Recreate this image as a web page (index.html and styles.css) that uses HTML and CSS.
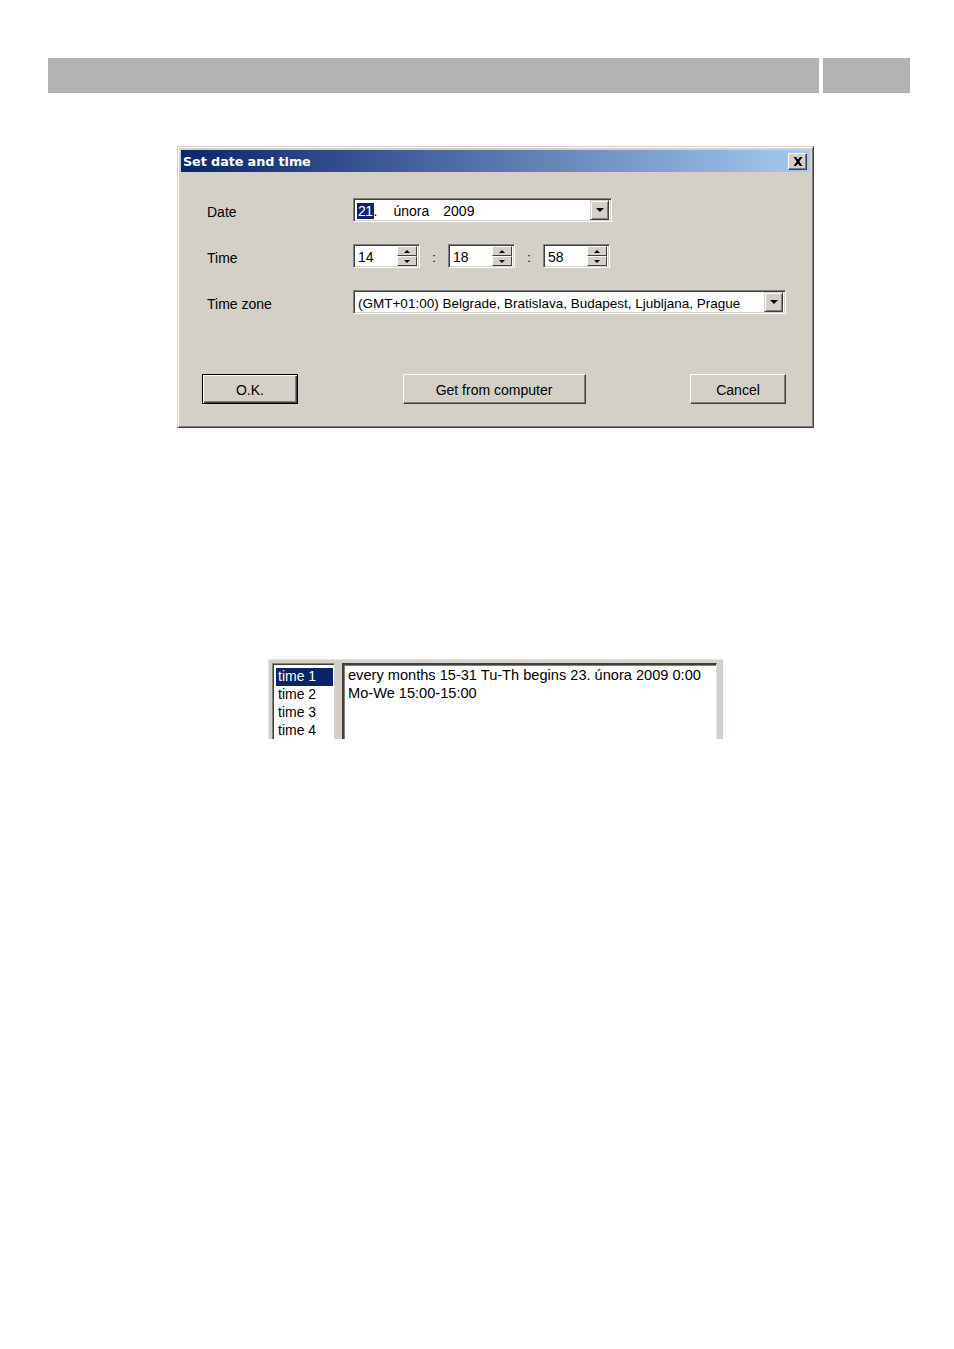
FILE: index.html
```html
<!DOCTYPE HTML>
<html>
<head>
    <meta http-equiv="content-type" content="text/html" />
    <title>Set date and time</title>
    <link rel="stylesheet" href="styles.css">
</head>
<body>

<div class="page-header">
    <div class="header-bar header-main"></div>
    <div class="header-bar header-side"></div>
</div>

<div class="dialog">
    <div class="dialog-title">
        <span class="title-text">Set date and time</span>
        <span class="title-close">
            <svg width="10" height="9" viewBox="0 0 10 9"><path d="M0.5 0h2.5l2 2.6L7 0h2.5L6.3 4.5 9.5 9H7L5 6.4 3 9H0.5l3.2-4.5z" fill="#000"/></svg>
        </span>
    </div>
    <div class="dialog-body">
        <div class="form-row">
            <div class="form-label">Date</div>
            <div class="field field-date">
                <span class="field-text"><span class="sel">21</span>.<span class="gap-a"></span>února<span class="gap-b"></span>2009</span>
                <span class="drop-btn"><span class="tri-down"></span></span>
            </div>
        </div>
        <div class="form-row">
            <div class="form-label">Time</div>
            <div class="time-group">
                <div class="field field-spin">
                    <span class="field-text">14</span>
                    <span class="spin"><span class="spin-btn"><span class="tri-up-s"></span></span><span class="spin-btn"><span class="tri-down-s"></span></span></span>
                </div>
                <span class="colon">:</span>
                <div class="field field-spin">
                    <span class="field-text">18</span>
                    <span class="spin"><span class="spin-btn"><span class="tri-up-s"></span></span><span class="spin-btn"><span class="tri-down-s"></span></span></span>
                </div>
                <span class="colon">:</span>
                <div class="field field-spin">
                    <span class="field-text">58</span>
                    <span class="spin"><span class="spin-btn"><span class="tri-up-s"></span></span><span class="spin-btn"><span class="tri-down-s"></span></span></span>
                </div>
            </div>
        </div>
        <div class="form-row">
            <div class="form-label">Time zone</div>
            <div class="field field-zone">
                <span class="field-text">(GMT+01:00) Belgrade, Bratislava, Budapest, Ljubljana, Prague</span>
                <span class="drop-btn"><span class="tri-down"></span></span>
            </div>
        </div>
        <div class="button-row">
            <div class="btn btn-default"><span>O.K.</span></div>
            <div class="btn btn-wide"><span>Get from computer</span></div>
            <div class="btn"><span>Cancel</span></div>
        </div>
    </div>
</div>

<div class="schedule">
    <div class="schedule-list">
        <div class="list-item active">time 1</div>
        <div class="list-item">time 2</div>
        <div class="list-item">time 3</div>
        <div class="list-item">time 4</div>
    </div>
    <div class="schedule-detail">
        <div>every months 15-31 Tu-Th begins 23. února 2009 0:00</div>
        <div>Mo-We 15:00-15:00</div>
    </div>
</div>

</body>
</html>
```

FILE: styles.css
```css
body {
    margin: 0;
    background: #fff;
    font-family: "Liberation Sans", Arial, sans-serif;
    font-size: 14px;
    color: #000;
}
.page-header {
    display: flex;
    gap: 4px;
    margin: 58px 0 0 48px;
}
.header-bar {
    height: 35px;
    background: #b3b3b3;
}
.header-main {
    width: 771px;
}
.header-side {
    width: 87px;
}

/* dialog window */
.dialog {
    width: 637px;
    height: 282px;
    margin: 53px 0 0 177px;
    box-sizing: border-box;
    background: #d4d0c8;
    border-top: 1px solid #d4d0c8;
    border-left: 1px solid #d4d0c8;
    border-right: 1px solid #404040;
    border-bottom: 1px solid #404040;
    box-shadow: inset 1px 1px 0 #fff, inset -1px -1px 0 #808080;
    padding: 3px;
}
.dialog-title {
    height: 22px;
    display: flex;
    align-items: center;
    justify-content: space-between;
    background: linear-gradient(to right, #0a246a, #a6caf0);
    padding: 0 3px 0 2px;
}
.title-text {
    color: #fff;
    font-family: "DejaVu Sans", Verdana, sans-serif;
    font-weight: bold;
    font-size: 12.8px;
    letter-spacing: -0.1px;
}
.title-close {
    width: 19px;
    height: 17px;
    box-sizing: border-box;
    background: #d4d0c8;
    border-top: 1px solid #fff;
    border-left: 1px solid #fff;
    border-right: 1px solid #404040;
    border-bottom: 1px solid #404040;
    box-shadow: inset -1px -1px 0 #808080;
    display: flex;
    align-items: center;
    justify-content: center;
}
.dialog-body {
    padding: 26px 0 0 26px;
}
.form-row {
    display: flex;
    align-items: center;
    height: 24px;
    margin-bottom: 22px;
}
.form-label {
    width: 146px;
    padding-top: 4px;
}

/* sunken fields */
.field {
    height: 24px;
    box-sizing: border-box;
    background: #fff;
    border-top: 1px solid #808080;
    border-left: 1px solid #808080;
    border-right: 1px solid #fff;
    border-bottom: 1px solid #fff;
    box-shadow: inset 1px 1px 0 #404040, inset -1px -1px 0 #d4d0c8;
    display: flex;
    align-items: center;
    justify-content: space-between;
    padding: 2px;
}
.field-text {
    padding-left: 2px;
    padding-top: 2px;
    font-size: 14px;
    white-space: nowrap;
}
.field-date {
    width: 259px;
}
.field-zone {
    width: 433px;
}
.field-zone .field-text {
    font-size: 13.5px;
}
.sel {
    background: #0a246a;
    color: #fff;
    padding: 0 1px;
    margin-left: -1px;
    letter-spacing: -0.5px;
}
.gap-a {
    display: inline-block;
    width: 16px;
}
.gap-b {
    display: inline-block;
    width: 14px;
}
.drop-btn {
    width: 19px;
    height: 20px;
    box-sizing: border-box;
    background: #d4d0c8;
    border-top: 1px solid #d4d0c8;
    border-left: 1px solid #d4d0c8;
    border-right: 1px solid #404040;
    border-bottom: 1px solid #404040;
    box-shadow: inset 1px 1px 0 #fff, inset -1px -1px 0 #808080;
    display: flex;
    align-items: center;
    justify-content: center;
}
.tri-down {
    width: 0;
    height: 0;
    border-left: 4px solid transparent;
    border-right: 4px solid transparent;
    border-top: 4px solid #000;
}

/* time spinners */
.time-group {
    display: flex;
    align-items: center;
}
.field-spin {
    width: 67px;
}
.colon {
    width: 28px;
    text-align: center;
    font-size: 13px;
    padding-top: 3px;
}
.spin {
    display: flex;
    flex-direction: column;
    width: 20px;
    height: 20px;
}
.spin-btn {
    flex: 1;
    box-sizing: border-box;
    background: #d4d0c8;
    border-top: 1px solid #fff;
    border-left: 1px solid #fff;
    border-right: 1px solid #404040;
    border-bottom: 1px solid #404040;
    display: flex;
    align-items: center;
    justify-content: center;
}
.tri-up-s {
    width: 0;
    height: 0;
    border-left: 3px solid transparent;
    border-right: 3px solid transparent;
    border-bottom: 3px solid #000;
}
.tri-down-s {
    width: 0;
    height: 0;
    border-left: 3px solid transparent;
    border-right: 3px solid transparent;
    border-top: 3px solid #000;
}

/* buttons */
.button-row {
    display: flex;
    justify-content: space-between;
    align-items: center;
    margin: 60px 0 0 -5px;
    width: 584px;
}
.btn {
    width: 96px;
    height: 30px;
    box-sizing: border-box;
    background: #d4d0c8;
    border-top: 1px solid #fff;
    border-left: 1px solid #fff;
    border-right: 1px solid #404040;
    border-bottom: 1px solid #404040;
    box-shadow: inset -1px -1px 0 #808080;
    display: flex;
    align-items: center;
    justify-content: center;
    padding-top: 2px;
}
.btn-wide {
    width: 183px;
}
.btn-default {
    border: 1px solid #000;
    box-shadow: inset 1px 1px 0 #fff, inset -1px -1px 0 #404040, inset -2px -2px 0 #808080;
}

/* schedule list */
.schedule {
    display: flex;
    gap: 8px;
    width: 455px;
    height: 80px;
    margin: 231px 0 0 268px;
    box-sizing: border-box;
    background: #d4d0c8;
    border-top: 1px solid #e8e6e2;
    border-left: 1px solid #e8e6e2;
    padding: 3px 6px 0 3px;
    overflow: hidden;
}
.schedule-list {
    width: 62px;
    height: 90px;
    box-sizing: border-box;
    background: #fff;
    border-top: 1px solid #808080;
    border-left: 1px solid #808080;
    box-shadow: inset 1px 1px 0 #404040;
    padding: 4px 1px 0 3px;
}
.list-item {
    height: 18px;
    line-height: 16px;
    padding-left: 2px;
}
.list-item.active {
    background: #0a246a;
    color: #fff;
}
.schedule-detail {
    flex: 1;
    height: 90px;
    box-sizing: border-box;
    background: #fff;
    border-top: 2px solid #404040;
    border-left: 2px solid #404040;
    border-right: 1px solid #e8e6e2;
    box-shadow: inset 1px 1px 0 #808080;
    padding: 1px 0 0 4px;
    font-size: 14.6px;
    line-height: 18px;
}
```
